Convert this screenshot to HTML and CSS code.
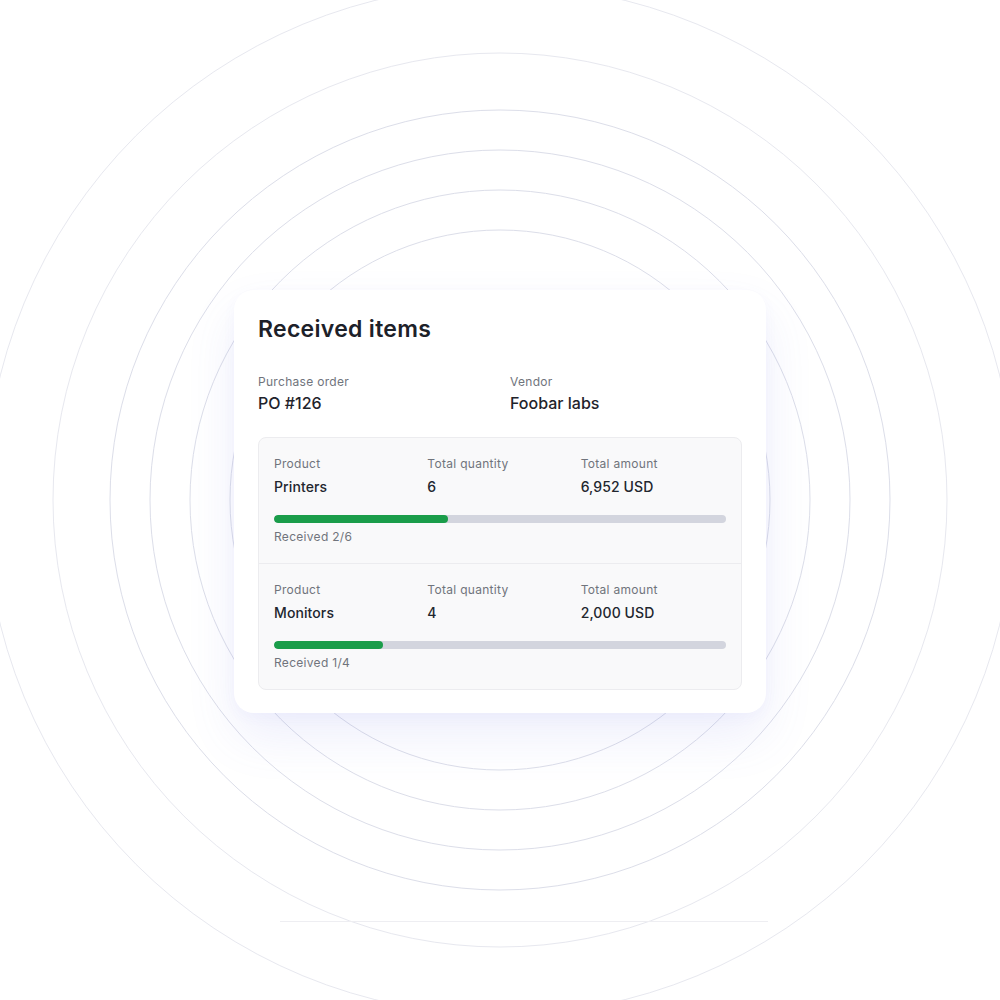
FILE: index.html
```html
<!DOCTYPE html>
<html lang="en">
<head>
<meta charset="utf-8">
<title>Received items</title>
<link rel="stylesheet" href="styles.css">
</head>
<body>
<svg class="rings" width="1000" height="1000" viewBox="0 0 1000 1000" aria-hidden="true">
  <circle cx="500" cy="500" r="515" class="ring faint"/>
  <circle cx="500" cy="500" r="447" class="ring faint"/>
  <circle cx="500" cy="500" r="390" class="ring"/>
  <circle cx="500" cy="500" r="350" class="ring"/>
  <circle cx="500" cy="500" r="310" class="ring"/>
  <circle cx="500" cy="500" r="270" class="ring"/>
  <line x1="280" y1="921.5" x2="768" y2="921.5" class="rule"/>
</svg>
<main class="stage">
  <section class="card">
    <h1 class="title">Received items</h1>
    <div class="meta">
      <div class="field">
        <div class="label">Purchase order</div>
        <div class="value-lg">PO #126</div>
      </div>
      <div class="field">
        <div class="label">Vendor</div>
        <div class="value-lg">Foobar labs</div>
      </div>
    </div>
    <div class="items">
      <div class="item">
        <div class="cols">
          <div class="field"><div class="label">Product</div><div class="value">Printers</div></div>
          <div class="field"><div class="label">Total quantity</div><div class="value">6</div></div>
          <div class="field"><div class="label">Total amount</div><div class="value">6,952 USD</div></div>
        </div>
        <div class="bar"><div class="fill" style="width:38.4%"></div></div>
        <div class="label received">Received 2/6</div>
      </div>
      <div class="item">
        <div class="cols">
          <div class="field"><div class="label">Product</div><div class="value">Monitors</div></div>
          <div class="field"><div class="label">Total quantity</div><div class="value">4</div></div>
          <div class="field"><div class="label">Total amount</div><div class="value">2,000 USD</div></div>
        </div>
        <div class="bar"><div class="fill" style="width:24.1%"></div></div>
        <div class="label received">Received 1/4</div>
      </div>
    </div>
  </section>
</main>
</body>
</html>
```
FILE: styles.css
```css
* { box-sizing: border-box; }
html, body { margin: 0; padding: 0; }
body {
  width: 1000px;
  height: 1000px;
  background: #ffffff;
  font-family: Inter, "Noto Sans", "Liberation Sans", sans-serif;
  color: #1f232b;
  position: relative;
  overflow: hidden;
}
.rings {
  position: absolute;
  left: 0;
  top: 0;
}
.ring {
  fill: none;
  stroke: #dcdee9;
  stroke-width: 1;
}
.ring.faint { stroke: #e7e8ef; }
.rule { stroke: #eeeef2; stroke-width: 1; }

.stage {
  position: relative;
  display: flex;
  justify-content: center;
  padding-top: 290px;
}
.card {
  width: 532px;
  background: #ffffff;
  border-radius: 20px;
  padding: 25px 24px 23px;
  box-shadow: 0 24px 50px rgba(96, 112, 230, 0.11), 0 4px 14px rgba(96, 112, 230, 0.04);
}
.title {
  margin: 0;
  font-size: 23px;
  line-height: 28px;
  font-weight: 600;
  letter-spacing: 0.3px;
  color: #1d2129;
}
.meta {
  display: grid;
  grid-template-columns: 1fr 1fr;
  column-gap: 20px;
  margin-top: 31px;
}
.field { display: flex; flex-direction: column; }
.label {
  font-size: 12px;
  line-height: 16px;
  letter-spacing: 0.3px;
  color: #70747c;
}
.value-lg {
  margin-top: 2px;
  font-size: 16px;
  line-height: 22px;
  font-weight: 500;
  color: #1f232b;
}
.items {
  margin-top: 23px;
  background: #f9f9fa;
  border: 1px solid #ececef;
  border-radius: 8px;
}
.item {
  padding: 18px 15px 18px;
}
.item + .item { border-top: 1px solid #ececef; }
.cols {
  display: grid;
  grid-template-columns: repeat(3, 1fr);
  column-gap: 8px;
}
.value {
  margin-top: 5px;
  font-size: 14px;
  line-height: 20px;
  font-weight: 500;
  letter-spacing: 0.1px;
  color: #22262e;
}
.bar {
  margin-top: 18px;
  height: 8px;
  border-radius: 4px;
  background: #d3d5de;
  overflow: hidden;
}
.fill {
  height: 100%;
  background: #1a9d4a;
  border-radius: 4px;
}
.received { margin-top: 6px; }
```
